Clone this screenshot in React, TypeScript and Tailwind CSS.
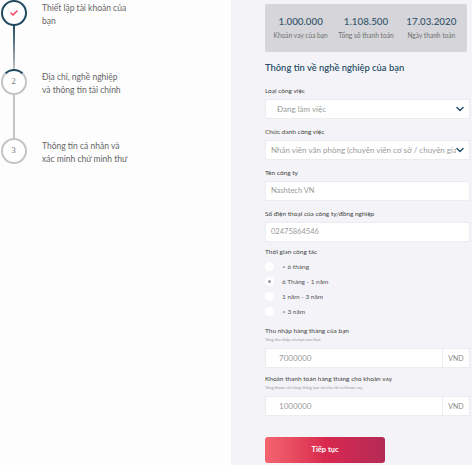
import React from 'react';

const font = { fontFamily: 'Lato, "Noto Sans", sans-serif' };

const Chevron: React.FC = () => (
  <svg width="8" height="6" viewBox="0 0 8 6" className="shrink-0">
    <path d="M1 1.5 L4 4.5 L7 1.5" fill="none" stroke="#2f5670" strokeWidth="1.6" strokeLinecap="round" strokeLinejoin="round" />
  </svg>
);

const Label: React.FC<{ children: React.ReactNode; className?: string }> = ({ children, className = '' }) => (
  <div className={`h-[8px] whitespace-nowrap text-[6.5px] leading-[8px] text-[#444] ${className}`}>{children}</div>
);

const SelectBox: React.FC<{ value: string; indent?: string }> = ({ value, indent = 'pl-[5px]' }) => (
  <div className={`mt-[4px] flex h-[20px] min-w-0 items-center overflow-hidden border border-[#ebebf0] bg-white pr-[5px] ${indent}`}>
    <span className="min-w-0 flex-1 overflow-hidden whitespace-nowrap text-[8px] text-[#9a9a9a]">{value}</span>
    <Chevron />
  </div>
);

const TextBox: React.FC<{ value: string }> = ({ value }) => (
  <div className="mt-[4px] flex h-[20px] items-center border border-[#ebebf0] bg-white pl-[5px]">
    <span className="text-[7.5px] text-[#9a9a9a]">{value}</span>
  </div>
);

const MoneyBox: React.FC<{ value: string }> = ({ value }) => (
  <div className="mt-[6px] flex h-[20px] border border-[#ebebf0] bg-white">
    <div className="flex flex-1 items-center pl-[13px] text-[8px] text-[#9a9a9a]">{value}</div>
    <div className="flex w-[27px] items-center justify-center border-l border-[#ebebf0] text-[7px] text-[#888]">VND</div>
  </div>
);

const steps = [
  { lines: ['Thiết lập tài khoản của', 'bạn'] },
  { lines: ['Địa chỉ, nghề nghiệp', 'và thông tin tài chính'] },
  { lines: ['Thông tin cá nhân và', 'xác minh chứ minh thư'] },
];

const StepCircle: React.FC<{ index: number }> = ({ index }) => {
  if (index === 0) {
    return (
      <div className="flex h-[26px] w-[26px] items-center justify-center rounded-full border-2 border-[#1f4a60] bg-white">
        <svg width="8" height="6" viewBox="0 0 8 6">
          <path d="M1 3 L3 5 L7 1" fill="none" stroke="#e8455a" strokeWidth="1.5" strokeLinecap="round" strokeLinejoin="round" />
        </svg>
      </div>
    );
  }
  return (
    <div
      className={`flex h-[26px] w-[26px] items-center justify-center rounded-full border-2 bg-white text-[9px] text-[#777] ${
        index === 1 ? 'border-[#c4c4c4] border-t-[#1f4a60]' : 'border-[#c4c4c4]'
      }`}
      style={{ fontFamily: '"Liberation Serif", serif' }}
    >
      {index + 1}
    </div>
  );
};

const radios = ['< 6 tháng', '6 Tháng - 1 năm', '1 năm - 3 năm', '> 3 năm'];

export default function App() {
  return (
    <div className="flex h-[465px] w-[472px] overflow-hidden bg-[#fdfdfd]" style={font}>
      {/* Steps */}
      <div className="w-[231px] shrink-0">
        <div className="flex flex-col">
          {steps.map((s, i) => (
            <div key={i} className="flex">
              <div className="flex w-[27px] flex-col items-center">
                <StepCircle index={i} />
                {i < steps.length - 1 && (
                  <div
                    className={`h-[43px] w-[2px] ${
                      i === 0 ? 'bg-gradient-to-b from-[#1f4a60] to-[#c4c4c4]' : 'bg-[#c4c4c4]'
                    }`}
                  />
                )}
              </div>
              <div className="ml-[15px] pt-[2px] text-[8.5px] leading-[12.5px] text-[#666]">
                {s.lines.map((l) => (
                  <div key={l}>{l}</div>
                ))}
              </div>
            </div>
          ))}
        </div>
      </div>

      {/* Form panel */}
      <div className="min-w-0 flex-1 bg-[#f4f4f8] pl-[34px] pr-[2px] pt-[4px]">
        <div className="mr-[3px] grid h-[48px] grid-cols-3 rounded-[2px] bg-[#d6d6da] px-[3px] pt-[11px]">
          {[
            ['1.000.000', 'Khoản vay của bạn'],
            ['1.108.500', 'Tổng số thanh toán'],
            ['17.03.2020', 'Ngày thanh toán'],
          ].map(([n, l]) => (
            <div key={n} className="flex flex-col items-center">
              <div className="text-[9.8px] font-semibold leading-[12px] text-[#3e5c72]">{n}</div>
              <div className="mt-[4px] whitespace-nowrap text-[6.6px] leading-[8px] text-[#707070]">{l}</div>
            </div>
          ))}
        </div>

        <div className="mt-[10px] h-[12px] whitespace-nowrap text-[9.4px] font-semibold leading-[12px] text-[#2a5069]">
          Thông tin về nghề nghiệp của bạn
        </div>

        <Label className="mt-[13px]">Loại công việc</Label>
        <SelectBox value="Đang làm việc" indent="pl-[11px]" />

        <Label className="mt-[9px]">Chức danh công việc</Label>
        <SelectBox value="Nhân viên văn phòng (chuyên viên cơ sở / chuyên gia)" />

        <Label className="mt-[9px]">Tên công ty</Label>
        <TextBox value="Nashtech VN" />

        <Label className="mt-[9px]">Số điện thoại của công ty/đồng nghiệp</Label>
        <TextBox value="02475864546" />

        <Label className="mt-[6px]">Thời gian công tác</Label>
        <div className="mt-[3px] flex flex-col">
          {radios.map((r, i) => (
            <div key={r} className="flex h-[15px] items-center">
              <div className="flex h-[9px] w-[9px] items-center justify-center rounded-full bg-white">
                {i === 1 && <div className="h-[3px] w-[3px] rounded-full bg-[#999]" />}
              </div>
              <span className="ml-[8px] text-[6.5px] text-[#555]">{r}</span>
            </div>
          ))}
        </div>

        <Label className="mt-[8px]">Thu nhập hàng tháng của bạn</Label>
        <div className="mt-[2px] h-[5px] whitespace-nowrap text-[4px] leading-[5px] text-[#999]">Tổng thu nhập của bạn sau thuế</div>
        <MoneyBox value="7000000" />

        <Label className="mt-[7px]">Khoản thanh toán hàng tháng cho khoản vay</Label>
        <div className="mt-[2px] h-[5px] whitespace-nowrap text-[4px] leading-[5px] text-[#999]">
          Tổng khoản chi hàng tháng bạn trả cho tất cả khoản vay
        </div>
        <MoneyBox value="1000000" />

        <button className="mt-[21px] flex h-[26px] w-[120px] items-center justify-center rounded-[3px] bg-gradient-to-r from-[#f4646f] via-[#d9284f] to-[#b32a56] text-[7.5px] font-bold text-white">
          Tiếp tục
        </button>
      </div>
    </div>
  );
}
